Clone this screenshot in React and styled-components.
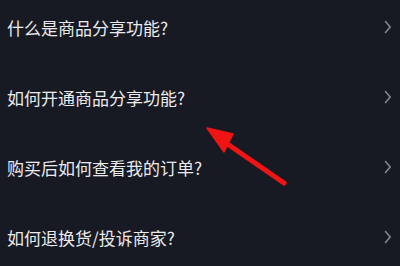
import React from "react";
import styled, { createGlobalStyle } from "styled-components";

const Global = createGlobalStyle`
  html, body { margin: 0; padding: 0; background: #171923; }
  body { width: 400px; height: 266px; overflow: hidden; }
`;

const Page = styled.div`
  position: relative;
  width: 400px;
  height: 266px;
  background: #171923;
  overflow: hidden;
  font-family: "Noto Sans CJK SC", "Noto Sans", sans-serif;
`;

const List = styled.ul`
  list-style: none;
  margin: 0;
  padding: 0;
  display: flex;
  flex-direction: column;
  gap: 16px;
`;

const Row = styled.li`
  height: 54px;
  display: flex;
  align-items: center;
  justify-content: space-between;
  padding: 0 8px 0 7px;
`;

const Label = styled.span`
  color: #ebebed;
  font-size: 17px;
  line-height: 1;
`;

const Chevron = () => (
  <svg width="8" height="14" viewBox="0 0 8 14">
    <path d="M1.5 1.5 L6.2 7 L1.5 12.5" fill="none" stroke="#85878f" strokeWidth="1.6" strokeLinecap="round" strokeLinejoin="round" />
  </svg>
);

const Overlay = styled.svg`
  position: absolute;
  left: 0;
  top: 0;
  pointer-events: none;
`;

const items = [
  "什么是商品分享功能?",
  "如何开通商品分享功能?",
  "购买后如何查看我的订单?",
  "如何退换货/投诉商家?",
];

export default function App() {
  return (
    <Page>
      <Global />
      <List>
        {items.map((t) => (
          <Row key={t}>
            <Label>{t}</Label>
            <Chevron />
          </Row>
        ))}
      </List>
      <Overlay width="400" height="266" viewBox="0 0 400 266">
        <line x1="226" y1="143" x2="284" y2="183" stroke="#f01414" strokeWidth="5" strokeLinecap="round" />
        <polygon points="207,128 233,134 224,152" fill="#f01414" stroke="#f01414" strokeWidth="1.5" strokeLinejoin="round" />
      </Overlay>
    </Page>
  );
}
